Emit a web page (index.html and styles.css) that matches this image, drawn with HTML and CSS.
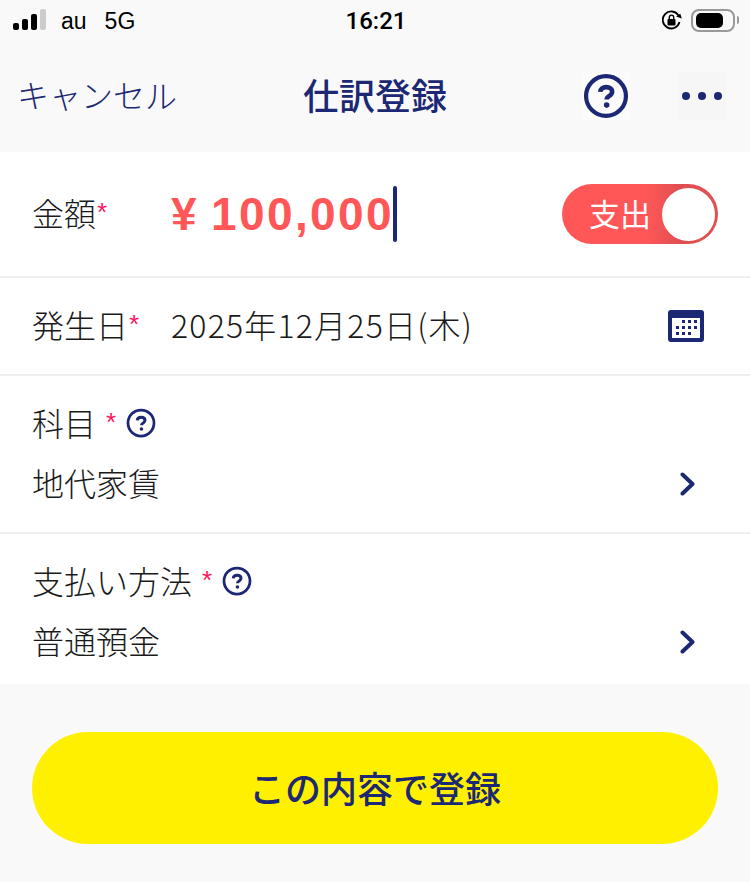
FILE: index.html
```html
<!DOCTYPE html>
<html lang="ja">
<head>
    <meta charset="UTF-8">
    <meta name="viewport" content="width=device-width, initial-scale=1.0">
    <title>仕訳登録</title>
    <link rel="stylesheet" href="styles.css">
</head>
<body>
    <svg class="defs" width="0" height="0">
        <symbol id="help" viewBox="0 0 48 48">
            <circle cx="24" cy="24" r="20.800" fill="none" stroke="currentColor" stroke-width="4.400"/>
            <path d="M18 19.800c.2-3.200 2.800-5.100 6.300-5.100 3.600 0 6.100 1.900 6.100 4.800 0 2.200-1.300 3.300-2.900 4.400-1.700 1.100-2.800 1.800-2.800 3.700" fill="none" stroke="currentColor" stroke-width="4.800"/>
            <circle cx="24.700" cy="33.500" r="2.900" fill="currentColor"/>
        </symbol>
        <symbol id="chevron" viewBox="0 0 16 24">
            <path d="M2.500 2.500 12.500 12 2.500 21.500" fill="none" stroke="currentColor" stroke-width="4" stroke-linecap="round" stroke-linejoin="round"/>
        </symbol>
    </svg>

    <div class="status-bar">
        <div class="status-left">
            <div class="signal">
                <span class="bar bar1"></span>
                <span class="bar bar2"></span>
                <span class="bar bar3"></span>
                <span class="bar bar4"></span>
            </div>
            <span class="carrier">au</span>
            <span>5G</span>
        </div>
        <div class="status-time">16:21</div>
        <div class="status-right">
            <svg class="rotate-lock" width="22" height="20" viewBox="0 0 22 20">
                <path d="M16.500 5.500A8.500 8.500 0 1 0 17.500 12" fill="none" stroke="#000" stroke-width="1.800"/>
                <path d="M14.500 7.500h6l-3-4z" fill="#000" transform="rotate(20 17 6)"/>
                <rect x="5.500" y="9" width="8" height="6.500" rx="1" fill="#000"/>
                <path d="M7.300 9V7.300a2.200 2.200 0 0 1 4.400 0V9" fill="none" stroke="#000" stroke-width="1.400"/>
            </svg>
            <div class="battery"><span class="battery-level"></span></div>
            <span class="battery-tip"></span>
        </div>
    </div>

    <div class="nav-bar">
        <div class="nav-cancel">キャンセル</div>
        <h1 class="nav-title">仕訳登録</h1>
        <div class="nav-actions">
            <div class="nav-button help-button">
                <svg class="help-large"><use href="#help"/></svg>
            </div>
            <div class="nav-button more-button">
                <span class="dot"></span>
                <span class="dot"></span>
                <span class="dot"></span>
            </div>
        </div>
    </div>

    <div class="form">
        <div class="row amount-row">
            <div class="row-label">金額<span class="required">*</span></div>
            <div class="amount">
                <span class="yen">¥</span><span>100,000</span><span class="caret"></span>
            </div>
            <div class="toggle">
                <span class="toggle-text">支出</span>
                <span class="toggle-knob"></span>
            </div>
        </div>
        <div class="row date-row">
            <div class="row-label">発生日<span class="required">*</span></div>
            <div class="date">2025年12月25日(木)</div>
            <svg class="calendar" width="36" height="32" viewBox="0 0 36 32">
                <rect width="36" height="32" rx="3" fill="#1d2874"/>
                <rect x="4" y="8" width="28" height="20" fill="#fff"/>
                <g fill="#1d2874">
                    <rect x="14" y="10" width="3" height="3"/>
                    <rect x="20" y="10" width="3" height="3"/>
                    <rect x="26" y="10" width="3" height="3"/>
                    <rect x="8" y="16" width="3" height="3"/>
                    <rect x="14" y="16" width="3" height="3"/>
                    <rect x="20" y="16" width="3" height="3"/>
                    <rect x="26" y="16" width="3" height="3"/>
                    <rect x="8" y="22" width="3" height="3"/>
                    <rect x="14" y="22" width="3" height="3"/>
                    <rect x="20" y="22" width="3" height="3"/>
                </g>
            </svg>
        </div>
        <div class="row-stack">
            <div class="stack-label">科目<span class="required spaced">*</span><svg class="help-small"><use href="#help"/></svg></div>
            <div class="stack-value">
                <span>地代家賃</span>
                <svg class="chevron"><use href="#chevron"/></svg>
            </div>
        </div>
        <div class="row-stack last">
            <div class="stack-label">支払い方法<span class="required spaced">*</span><svg class="help-small"><use href="#help"/></svg></div>
            <div class="stack-value">
                <span>普通預金</span>
                <svg class="chevron"><use href="#chevron"/></svg>
            </div>
        </div>
    </div>

    <div class="submit-wrap">
        <button class="submit">この内容で登録</button>
    </div>
</body>
</html>
```

FILE: styles.css
```css
* {
    box-sizing: border-box;
}
body {
    margin: 0;
    padding: 0;
    background-color: #f9f9f9;
    color: #1a1a1a;
    font-family: "Noto Sans CJK JP", "Liberation Sans", sans-serif;
}
.defs {
    display: block;
    height: 0;
}

/* status bar */
.status-bar {
    display: grid;
    grid-template-columns: 1fr auto 1fr;
    align-items: center;
    height: 40px;
    padding: 0 11px 0 13px;
    font-family: "Liberation Sans", sans-serif;
    font-size: 23px;
    color: #000;
}
.status-left {
    display: flex;
    align-items: center;
    gap: 18px;
    padding-top: 2px;
}
.signal {
    display: flex;
    align-items: flex-end;
    gap: 3px;
    height: 21px;
    margin-right: -3px;
    margin-bottom: 3px;
}
.bar {
    width: 6px;
    border-radius: 2px;
    background-color: #000;
}
.bar1 { height: 7px; }
.bar2 { height: 11px; }
.bar3 { height: 16px; }
.bar4 { height: 21px; background-color: #ccc; }
.status-time {
    padding-top: 2px;
    font-family: Roboto, sans-serif;
    font-size: 24px;
    font-weight: 500;
}
.status-right {
    display: flex;
    align-items: center;
    justify-content: flex-end;
}
.rotate-lock {
    margin-right: 7px;
}
.battery {
    width: 44px;
    height: 23px;
    padding: 2px 3px;
    border: 2px solid #999;
    border-radius: 8px;
}
.battery-level {
    display: block;
    width: 27px;
    height: 100%;
    border-radius: 5px;
    background-color: #000;
}
.battery-tip {
    width: 2px;
    height: 8px;
    margin-left: 2px;
    border-radius: 0 2px 2px 0;
    background-color: #999;
}

/* nav */
.nav-bar {
    display: grid;
    grid-template-columns: 1fr auto 1fr;
    align-items: center;
    height: 112px;
    padding: 0 24px 4px;
    color: #1d2874;
}
.nav-cancel {
    margin-left: -7px;
    font-size: 32px;
    font-weight: 300;
}
.nav-title {
    margin: 0;
    font-size: 36px;
    font-weight: 500;
}
.nav-actions {
    display: flex;
    justify-content: flex-end;
    gap: 48px;
    margin-top: 4px;
}
.nav-button {
    display: flex;
    align-items: center;
    justify-content: center;
    width: 48px;
    height: 48px;
}
.help-button {
    background-color: #fbfbfb;
}
.more-button {
    gap: 8px;
    background-color: #f6f6f6;
}
.help-large {
    width: 46px;
    height: 46px;
}
.dot {
    width: 8px;
    height: 8px;
    border-radius: 50%;
    background-color: #1d2874;
}

/* form rows */
.form {
    background-color: #fff;
    font-size: 32px;
    font-weight: 300;
}
.row {
    display: flex;
    align-items: center;
    padding: 0 32px;
    border-bottom: 2px solid #eee;
}
.amount-row {
    height: 126px;
}
.date-row {
    height: 98px;
}
.row-label {
    display: flex;
    width: 139px;
    flex-shrink: 0;
    padding-bottom: 4px;
    line-height: 48px;
}
.required {
    margin-top: 0;
    margin-left: 1px;
    font-family: "Liberation Sans", sans-serif;
    font-size: 26px;
    font-weight: 400;
    color: #ff1464;
}
.required.spaced {
    margin: 0 10px 0 10px;
    line-height: 48px;
}
.amount {
    display: flex;
    align-items: center;
    flex: 1;
    font-family: "Liberation Sans", sans-serif;
    font-size: 46px;
    font-weight: bold;
    letter-spacing: 2.400px;
    color: #ff5757;
}
.yen {
    margin-right: 12px;
}
.caret {
    width: 4px;
    height: 56px;
    margin-left: -1px;
    border-radius: 2px;
    background-color: #1d2874;
}
.toggle {
    display: flex;
    align-items: center;
    justify-content: space-between;
    width: 156px;
    height: 60px;
    padding: 0 3px 0 27px;
    border-radius: 30px;
    background: linear-gradient(90deg, #ff5757 55%, #e04f52 75%);
    color: #fff;
    font-size: 31px;
    font-weight: 400;
}
.toggle-text {
    padding-bottom: 4px;
}
.toggle-knob {
    width: 53px;
    height: 53px;
    border-radius: 50%;
    background-color: #fff;
}
.date {
    flex: 1;
    padding-bottom: 4px;
    letter-spacing: 1.200px;
}
.calendar {
    margin-right: 14px;
}
.row-stack {
    padding: 24px 32px;
    border-bottom: 2px solid #eee;
    height: 158px;
}
.row-stack.last {
    height: 150px;
    border-bottom: none;
}
.stack-label {
    display: flex;
    align-items: center;
    height: 48px;
    padding-bottom: 4px;
}
.stack-value {
    display: flex;
    align-items: center;
    justify-content: space-between;
    height: 48px;
    margin-top: 12px;
    padding-bottom: 4px;
    padding-right: 22px;
}
.help-small {
    width: 30px;
    height: 30px;
    margin-top: 2px;
    color: #1d2874;
}
.chevron {
    width: 16px;
    height: 24px;
    margin-top: 4px;
    color: #1d2874;
}

/* submit */
.submit-wrap {
    padding: 48px 32px 0;
}
.submit {
    display: block;
    width: 100%;
    height: 112px;
    padding-bottom: 4px;
    border: none;
    border-radius: 56px;
    background-color: #fff000;
    color: #1d2874;
    font-family: inherit;
    font-size: 36px;
    font-weight: 500;
}
```
